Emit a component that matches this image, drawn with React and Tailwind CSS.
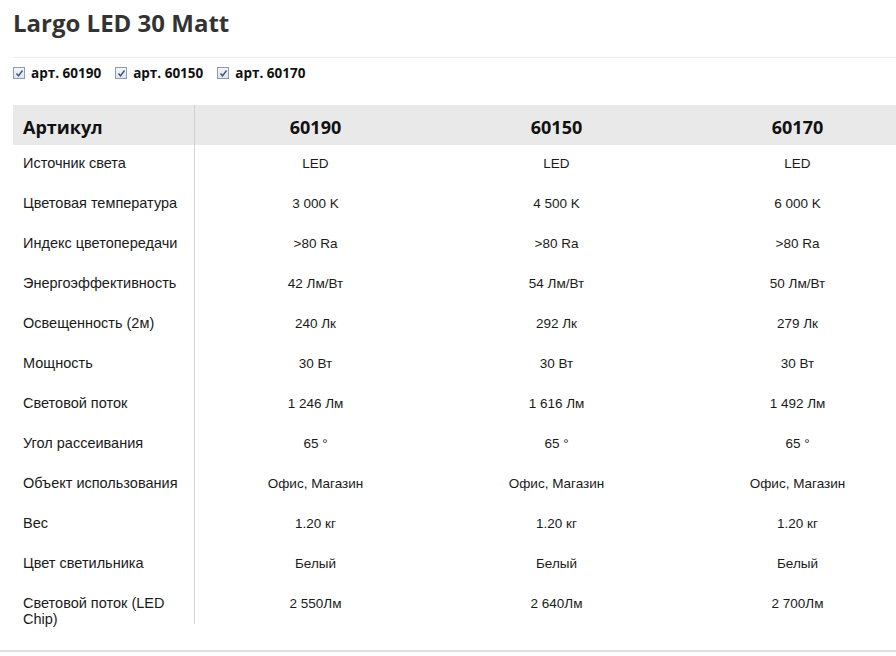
import React from "react";

const cols = ["60190", "60150", "60170"];
const rows = [
  ["Источник света", "LED", "LED", "LED"],
  ["Цветовая температура", "3 000 K", "4 500 K", "6 000 K"],
  ["Индекс цветопередачи", ">80 Ra", ">80 Ra", ">80 Ra"],
  ["Энергоэффективность", "42 Лм/Вт", "54 Лм/Вт", "50 Лм/Вт"],
  ["Освещенность (2м)", "240 Лк", "292 Лк", "279 Лк"],
  ["Мощность", "30 Вт", "30 Вт", "30 Вт"],
  ["Световой поток", "1 246 Лм", "1 616 Лм", "1 492 Лм"],
  ["Угол рассеивания", "65 °", "65 °", "65 °"],
  ["Объект использования", "Офис, Магазин", "Офис, Магазин", "Офис, Магазин"],
  ["Вес", "1.20 кг", "1.20 кг", "1.20 кг"],
  ["Цвет светильника", "Белый", "Белый", "Белый"],
  ["Световой поток (LED Chip)", "2 550Лм", "2 640Лм", "2 700Лм"],
];

function Check() {
  return (
    <span className="inline-flex w-[12px] h-[12px] border border-[#8f9bb3] bg-gradient-to-b from-[#f4f6fa] to-[#dfe4ee] items-center justify-center">
      <svg width="9" height="9" viewBox="0 0 9 9">
        <path d="M1.5 4.5 L3.5 6.8 L7.5 1.5" fill="none" stroke="#3b4f7a" strokeWidth="1.4" />
      </svg>
    </span>
  );
}

export default function App() {
  return (
    <div className="w-[896px] h-[656px] overflow-hidden bg-white relative">
      <div className="pl-[13px]">
        <div className="h-[58px] border-b border-[#ececec]">
          <h1
            className="pt-[5px] text-[24px] font-bold text-[#333333] leading-normal"
            style={{ fontFamily: "'Open Sans', sans-serif" }}
          >
            Largo LED 30 Matt
          </h1>
        </div>
        <div
          className="h-[47px] flex items-start pt-[7px] gap-[14px] text-[13.5px] font-bold text-[#111]"
          style={{ fontFamily: "'Open Sans', sans-serif" }}
        >
          {cols.map((c) => (
            <label key={c} className="flex items-center gap-[6px] h-[16px]">
              <Check />
              <span>арт. {c}</span>
            </label>
          ))}
        </div>
        <div className="w-[905px]">
          <div
            className="flex h-[40px] bg-[#e9e9e9] items-center text-[18px] font-bold text-[#111]"
            style={{ fontFamily: "'Open Sans', sans-serif" }}
          >
            <div className="w-[182px] shrink-0 pl-[10px] pt-[4px] h-full flex items-center border-r border-[#cfcfcf]">Артикул</div>
            {cols.map((c) => (
              <div key={c} className="w-[241px] shrink-0 text-center pt-[4px]">{c}</div>
            ))}
          </div>
          {rows.map((r, i) => (
            <div
              key={i}
              className="flex h-[40px] leading-[16px] text-[#1a1a1a]"
              style={{ fontFamily: "'Liberation Sans', Arial, sans-serif" }}
            >
              <div className={`w-[182px] shrink-0 pl-[10px] pr-[12px] pt-[10px] text-[14.5px] border-r border-[#d6d6d6] ${i === rows.length - 1 ? "h-[39px]" : ""}`}>
                {r[0]}
              </div>
              {r.slice(1).map((v, j) => (
                <div key={j} className="w-[241px] shrink-0 text-center pt-[11px] text-[13.5px]">
                  {v}
                </div>
              ))}
            </div>
          ))}
        </div>
      </div>
      <div className="absolute left-0 right-0 top-[650px] h-[2px] bg-[#dedede]" />
    </div>
  );
}
